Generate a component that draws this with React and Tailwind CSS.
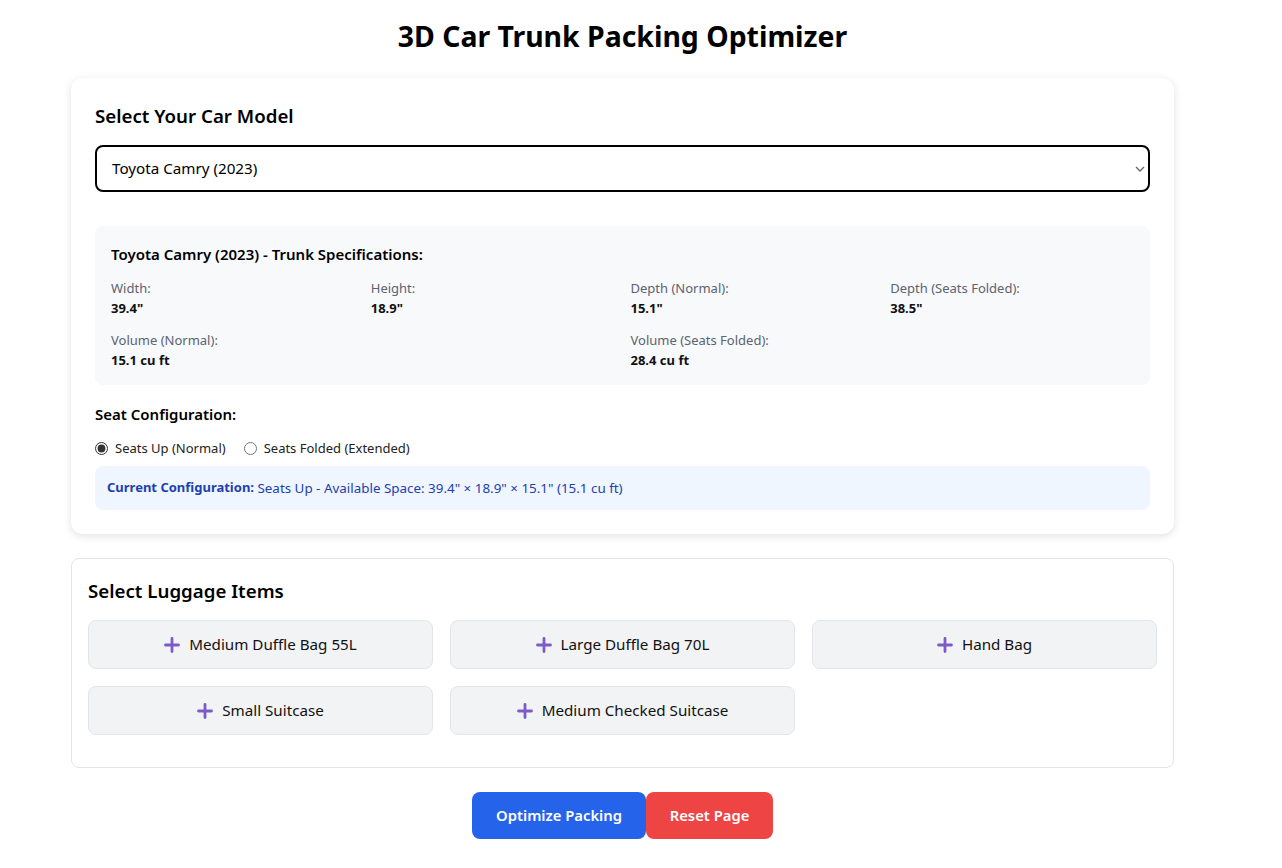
import { useState } from "react";

const CAR = {
    name: "Toyota Camry (2023)",
    width: 39.4,
    height: 18.9,
    depth: 15.1,
    depthFolded: 38.5,
    volume: 15.1,
    volumeFolded: 28.4,
};

const LUGGAGE = [
    "Medium Duffle Bag 55L",
    "Large Duffle Bag 70L",
    "Hand Bag",
    "Small Suitcase",
    "Medium Checked Suitcase",
];

const PlusIcon = () => (
    <svg width="16" height="16" viewBox="0 0 16 16" className="shrink-0">
        <path
            d="M8 1.5v13M1.5 8h13"
            stroke="#7b5cc7"
            strokeWidth="2.8"
            strokeLinecap="round"
        />
    </svg>
);

const Spec = ({ label, value, wide }) => (
    <div className={wide ? "col-span-2" : ""}>
        <p className="text-[13px] leading-[20px] text-[#5b6270]">{label}</p>
        <p className="text-[13px] leading-[20px] font-bold text-[#111]">
            {value}
        </p>
    </div>
);

export default function App() {
    const [seats, setSeats] = useState("up");

    return (
        <div
            className="w-[1245px] bg-white pb-[30px] text-[#111]"
            style={{ fontFamily: '"Noto Sans", "Open Sans", sans-serif' }}
        >
            <h1 className="pt-[14px] text-center text-[28.4px] leading-[44px] font-bold text-black">
                3D Car Trunk Packing Optimizer
            </h1>

            <div className="mx-auto mt-[20px] w-[1103px]">
                {/* Car model card */}
                <div className="rounded-xl bg-white px-6 pt-[24px] pb-6 shadow-[0_2px_8px_rgba(0,0,0,0.12)]">
                    <h2 className="text-[18.7px] leading-7 font-semibold text-black">
                        Select Your Car Model
                    </h2>
                    <div className="relative mt-[15px]">
                        <div className="flex h-[47px] items-center rounded-lg border-2 border-black px-[15px] text-[15.2px] text-black">
                            {CAR.name}
                        </div>
                        <svg
                            width="10"
                            height="6"
                            viewBox="0 0 10 6"
                            className="absolute top-[21px] right-[5px]"
                        >
                            <path
                                d="M1 1l4 4 4-4"
                                fill="none"
                                stroke="#666"
                                strokeWidth="1.3"
                            />
                        </svg>
                    </div>

                    <div className="mt-[34px] rounded-lg bg-[#f8f9fb] px-4 pt-[16px] pb-[15px]">
                        <h3 className="text-[15px] leading-[24px] font-semibold text-black">
                            {CAR.name} - Trunk Specifications:
                        </h3>
                        <div className="mt-[12px] grid grid-cols-4 gap-x-4 gap-y-[12px]">
                            <Spec label="Width:" value={`${CAR.width}"`} />
                            <Spec label="Height:" value={`${CAR.height}"`} />
                            <Spec label="Depth (Normal):" value={`${CAR.depth}"`} />
                            <Spec
                                label="Depth (Seats Folded):"
                                value={`${CAR.depthFolded}"`}
                            />
                            <Spec
                                label="Volume (Normal):"
                                value={`${CAR.volume} cu ft`}
                                wide
                            />
                            <Spec
                                label="Volume (Seats Folded):"
                                value={`${CAR.volumeFolded} cu ft`}
                                wide
                            />
                        </div>
                    </div>

                    <h3 className="mt-[17px] text-[15px] leading-[24px] font-semibold text-black">
                        Seat Configuration:
                    </h3>
                    <div className="mt-[12px] flex items-center gap-[18px] text-[13px] leading-5 text-[#222]">
                        <label className="flex items-center gap-[7px]">
                            <input
                                type="radio"
                                name="seats"
                                checked={seats === "up"}
                                onChange={() => setSeats("up")}
                                className="h-[13px] w-[13px] accent-[#333]"
                            />
                            Seats Up (Normal)
                        </label>
                        <label className="flex items-center gap-[7px]">
                            <input
                                type="radio"
                                name="seats"
                                checked={seats === "folded"}
                                onChange={() => setSeats("folded")}
                                className="h-[13px] w-[13px] accent-[#333]"
                            />
                            Seats Folded (Extended)
                        </label>
                    </div>
                    <div className="mt-[8px] flex h-[44px] items-center rounded-lg bg-[#eff6ff] px-3 text-[13px] text-[#1e40af]">
                        <span className="font-bold">Current Configuration:</span>
                        <span className="text-[13.4px]">
                            &nbsp;Seats Up - Available Space: 39.4" × 18.9" × 15.1"
                            (15.1 cu ft)
                        </span>
                    </div>
                </div>

                {/* Luggage card */}
                <div className="mt-[24px] rounded-lg border border-[#e2e4e8] bg-white px-4 pt-[18px] pb-[32px]">
                    <h2 className="text-[18.7px] leading-7 font-semibold text-black">
                        Select Luggage Items
                    </h2>
                    <div className="mt-[15px] grid grid-cols-3 gap-x-[17px] gap-y-[17px]">
                        {LUGGAGE.map((item) => (
                            <button
                                key={item}
                                className="flex h-[49px] items-center justify-center gap-[9px] rounded-lg border border-[#e3e5e9] bg-[#f2f3f5] text-[15.2px] text-[#111]"
                            >
                                <PlusIcon />
                                {item}
                            </button>
                        ))}
                    </div>
                </div>

                <div className="mt-[24px] flex justify-center">
                    <button className="h-[47px] w-[174px] rounded-lg bg-[#2563eb] text-[14.8px] font-semibold text-white">
                        Optimize Packing
                    </button>
                    <button className="h-[47px] w-[127px] rounded-lg bg-[#ef4444] text-[14.8px] font-semibold text-white">
                        Reset Page
                    </button>
                </div>
            </div>
        </div>
    );
}
